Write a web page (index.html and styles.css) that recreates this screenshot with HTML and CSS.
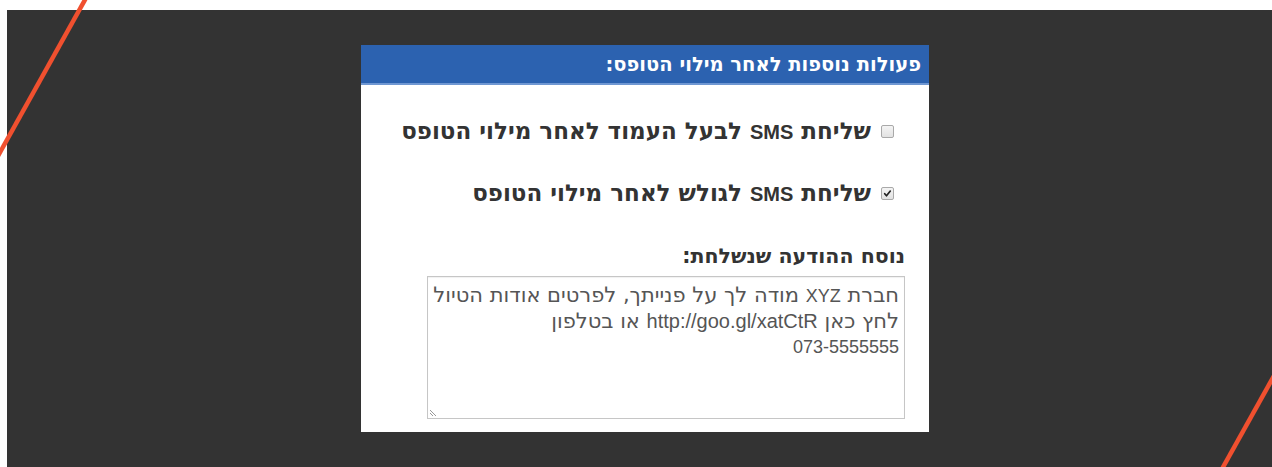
FILE: index.html
```html
<!DOCTYPE html>
<html lang="he">
<head>
<meta charset="utf-8">
<title>פעולות נוספות</title>
<link rel="stylesheet" href="styles.css">
</head>
<body>
<div class="stage">
  <section class="panel" dir="rtl">
    <header class="panel-head">פעולות נוספות לאחר מילוי הטופס:</header>
    <div class="panel-body">
      <label class="option">
        <span class="box"></span>
        <span class="option-text">שליחת <span class="latin">SMS</span> לבעל העמוד לאחר מילוי הטופס</span>
      </label>
      <label class="option">
        <span class="box checked">
          <svg viewBox="0 0 13 13" width="13" height="13"><path d="M3.2 6.8 L5.3 9.2 L9.8 3.6" fill="none" stroke="#222" stroke-width="2" stroke-linecap="round" stroke-linejoin="round"/></svg>
        </span>
        <span class="option-text">שליחת <span class="latin">SMS</span> לגולש לאחר מילוי הטופס</span>
      </label>
      <div class="field-label">נוסח ההודעה שנשלחת:</div>
      <div class="message">
        <div class="message-text">חברת <span class="latin">XYZ</span> מודה לך על פנייתך, לפרטים אודות הטיול<br>לחץ כאן <span class="latin url">http://goo.gl/xatCtR</span> או בטלפון<br><span class="latin">073-5555555</span></div>
        <svg class="grip" viewBox="0 0 10 10" width="10" height="10"><path d="M1 3 L7 9 M1 6 L4 9" stroke="#999" stroke-width="1"/></svg>
      </div>
    </div>
  </section>
</div>
<svg class="streaks" width="1272" height="467" viewBox="0 0 1272 467">
  <line x1="86" y1="-2" x2="-2" y2="156" stroke="#f0502f" stroke-width="4.5"/>
  <line x1="1275" y1="374" x2="1222" y2="469" stroke="#f0502f" stroke-width="4.5"/>
</svg>
</body>
</html>
```
FILE: styles.css
```css
html, body {
  margin: 0;
  padding: 0;
  background: #ffffff;
}

body {
  position: relative;
  width: 1272px;
  height: 467px;
  overflow: hidden;
  font-family: "DejaVu Sans", sans-serif;
}

.latin {
  font-family: "Liberation Sans", Arial, sans-serif;
}

.stage {
  margin: 10px 0 0 7px;
  height: 457px;
  background: #333333;
  padding: 35px 0 0 354px;
  box-sizing: border-box;
}

.panel {
  width: 568px;
  height: 387px;
  background: #ffffff;
  display: flex;
  flex-direction: column;
}

.panel-head {
  height: 38px;
  background: #2c62b0;
  border-bottom: 2px solid #6f97d2;
  color: #ffffff;
  font-weight: bold;
  font-size: 19.5px;
  line-height: 40px;
  padding-right: 8px;
  box-sizing: content-box;
}

.panel-body {
  display: flex;
  flex-direction: column;
  padding: 0 24px 0 24px;
}

.option {
  display: flex;
  align-items: center;
  gap: 10px;
  padding-right: 11px;
  height: 62px;
  color: #333333;
  font-weight: bold;
  font-size: 23px;
  line-height: 28px;
}

.option .latin {
  font-size: 20px;
}

.option:first-child {
  margin-top: 15px;
}

.box {
  width: 11px;
  height: 11px;
  border: 1px solid #a9a9a9;
  border-radius: 2px;
  background: linear-gradient(#f4f4f4, #e2e2e2);
  display: flex;
  align-items: center;
  justify-content: center;
  flex: none;
}

.box svg {
  width: 11px;
  height: 11px;
}

.field-label {
  margin-top: 22px;
  color: #333333;
  font-weight: bold;
  font-size: 20.5px;
  line-height: 20px;
}

.message {
  position: relative;
  margin-top: 10px;
  width: 476px;
  height: 141px;
  border: 1px solid #c6c6c6;
  box-shadow: inset 0 1px 1px rgba(0, 0, 0, 0.06);
}

.message-text {
  padding: 6px 5px 0 4px;
  color: #555555;
  font-size: 21px;
  line-height: 25px;
}

.message-text .latin {
  font-size: 18px;
}

.message-text .url {
  font-size: 20px;
}

.grip {
  position: absolute;
  left: 1px;
  bottom: 1px;
}

.streaks {
  position: absolute;
  left: 0;
  top: 0;
  pointer-events: none;
}
```
